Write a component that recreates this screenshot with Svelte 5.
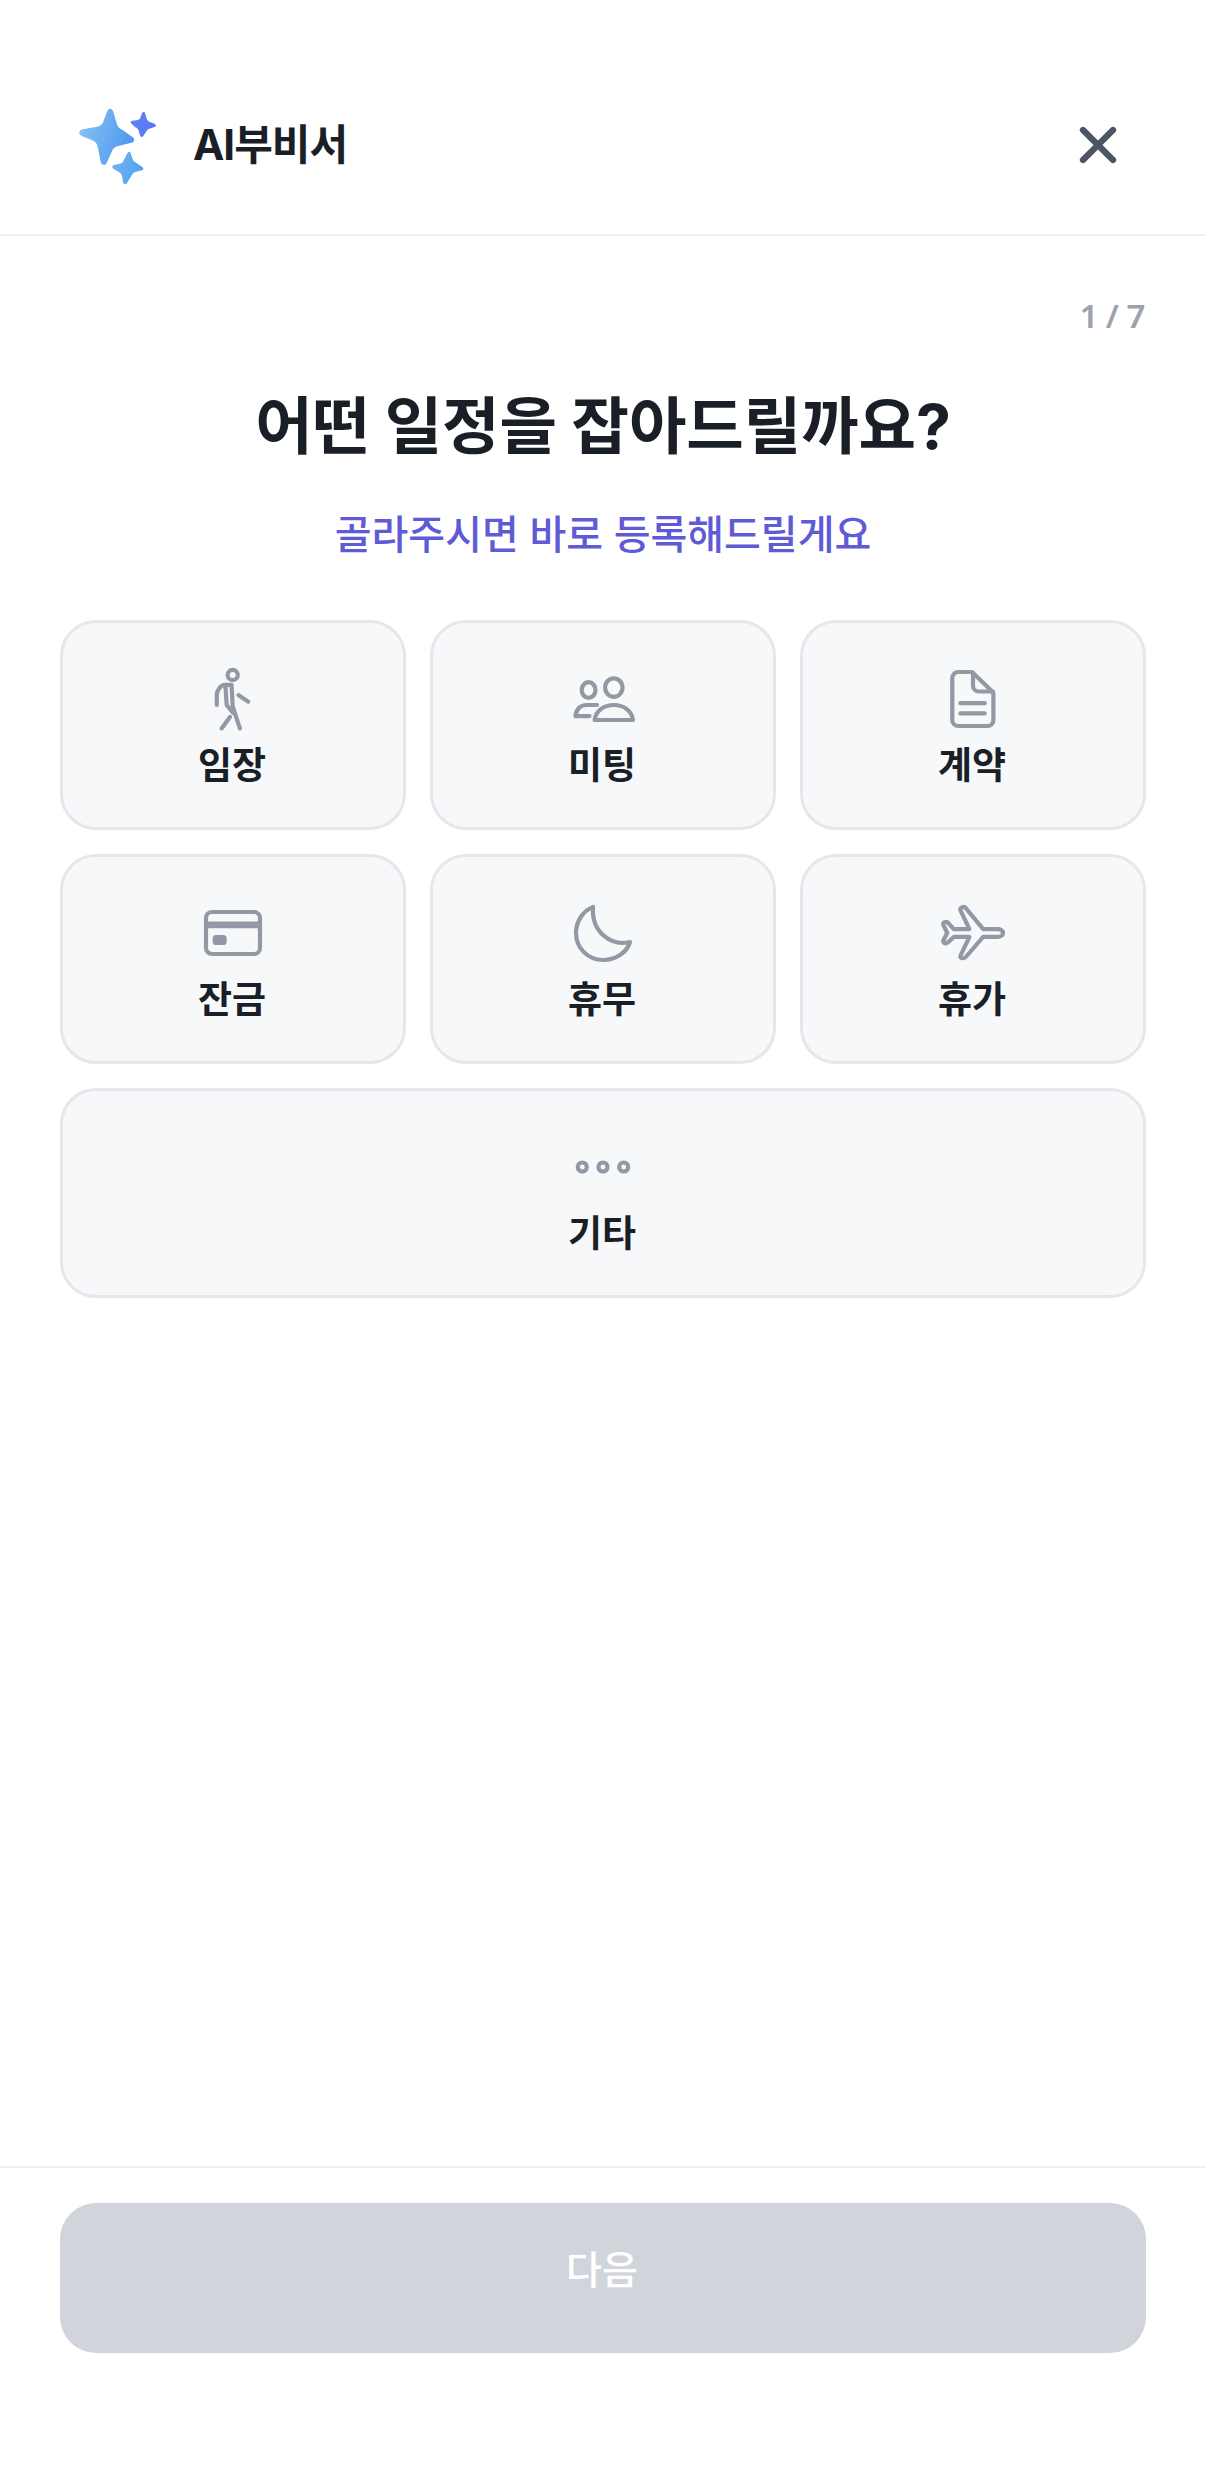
<script>
	const options = [
		{ id: 'walk', label: '임장' },
		{ id: 'people', label: '미팅' },
		{ id: 'doc', label: '계약' },
		{ id: 'card', label: '잔금' },
		{ id: 'moon', label: '휴무' },
		{ id: 'plane', label: '휴가' },
		{ id: 'more', label: '기타' }
	];
</script>

<div class="page">
	<header class="header">
		<svg class="logo" width="110" height="110" viewBox="0 0 330 330">
			<defs>
				<linearGradient id="star-a" x1="0" y1="0.3" x2="1" y2="0.6">
					<stop offset="0" stop-color="#86c1f6" />
					<stop offset="1" stop-color="#4c97ee" />
				</linearGradient>
				<linearGradient id="star-b" x1="0" y1="0" x2="1" y2="1">
					<stop offset="0" stop-color="#5a86f3" />
					<stop offset="1" stop-color="#5c74f4" />
				</linearGradient>
				<linearGradient id="star-c" x1="0" y1="0.3" x2="1" y2="0.6">
					<stop offset="0" stop-color="#72b4f4" />
					<stop offset="1" stop-color="#4f9ff2" />
				</linearGradient>
			</defs>
			<path fill="url(#star-a)" d="M141 65C145 53 156 53 160 65L170 100C172 110 178 116 188 120L216 140C226 146 224 156 214 158L175 168C165 170 158 176 155 186L140 218C135 228 124 226 122 215L113 170C111 160 105 153 95 150L65 138C54 132 56 120 68 118L112 110C122 108 128 102 131 92Z" />
			<path fill="url(#star-b)" d="M245 72C248 64 254 64 256 72L260 86C262 91 265 94 270 96L283 101C289 104 289 109 283 111L268 116C263 118 260 121 258 126L250 138C246 143 241 142 240 136L236 122C234 117 231 114 226 112L215 102C210 98 211 93 217 92L233 90C238 89 241 86 242 81Z" />
			<path fill="url(#star-c)" d="M201 192C204 184 211 184 213 192L218 208C220 213 223 216 228 218L246 230C252 234 251 240 245 241L226 246C221 247 217 251 215 256L201 279C197 285 190 283 189 276L186 258C185 253 182 249 177 247L161 237C155 233 156 227 162 225L180 221C185 220 189 216 191 211Z" />
		</svg>
		<span class="brand">AI부비서</span>
		<svg class="close" width="72" height="72" viewBox="0 0 24 24" fill="none" stroke="#4b5563" stroke-width="2.1" stroke-linecap="round">
			<path d="M17 7L7 17M7 7l10 10" />
		</svg>
	</header>

	<main class="content">
		<div class="step">1 / 7</div>
		<h1 class="title">어떤 일정을 잡아드릴까요?</h1>
		<p class="subtitle">골라주시면 바로 등록해드릴게요</p>

		<div class="grid">
			{#each options as option}
				<button class="option" class:wide={option.id === 'more'}>
					<svg width="72" height="72" viewBox="0 0 24 24" fill="none" stroke="#9399a4" stroke-width="1.4" stroke-linecap="round" stroke-linejoin="round">
						{#if option.id === 'walk'}
							<circle cx="11.9" cy="4" r="1.7" />
							<path d="M6.6 14V10.7C6.6 9 8 7.3 9.3 7.3H11.5L11.9 14.5L14.3 21.8" />
							<path d="M9.5 7.9L9.9 14L12 16.6M11 18L8.2 21.8M13.8 10.7L17.1 12.9" />
						{:else if option.id === 'people'}
							<ellipse cx="7.2" cy="9" rx="2.3" ry="2.6" />
							<ellipse cx="15.6" cy="8.2" rx="2.9" ry="3.1" />
							<path d="M9.2 19C9.6 16 12.2 14 15.6 14C19 14 21.6 16 22 19Z" />
							<path d="M7.5 17.7H2.8C3 15.5 4.5 14 6.5 14H10" />
						{:else if option.id === 'doc'}
							<path d="M5.1 5a2 2 0 0 1 2-2h4.2a1 1 0 0 1 .8.4l6.4 6.2a1 1 0 0 1 .3.7V19a2 2 0 0 1-2 2H7.1a2 2 0 0 1-2-2Z" />
							<path d="M12 3.2V7.5a2 2 0 0 0 2 2h4.6M7.8 13.4H15.9M7.8 16.8H15.9" />
						{:else if option.id === 'card'}
							<rect x="3" y="5" width="18" height="14" rx="2" />
							<path d="M3 9.3H21" stroke-width="2.2" stroke-linecap="butt" />
							<rect x="5.2" y="12.7" width="4.7" height="3.3" rx="1.2" fill="#9399a4" stroke="none" />
						{:else if option.id === 'moon'}
							<path d="M8.7 3.3C5.2 4.7 3 8.2 3 12C3 17 7 21 12 21C16 21 19.8 18.8 21 15C15 16.5 8 12 8.7 3.3Z" />
						{:else if option.id === 'plane'}
							<path d="M22 12c0 .8-.8 1.3-1.8 1.3H15.4L9.6 20c-.5.6-2 .6-1.8-.4L10.8 13.3H5.6L3.6 15.2c-.7.5-1.6.2-1.5-.6L3.4 12L2.1 9.2c-.1-.8.8-1.2 1.5-.7L5.6 10.7H10.8L7.8 4.4c-.2-1 1.3-1.4 1.8-.7L15.4 10.7H20.2c1 0 1.8.5 1.8 1.3Z" />
						{:else}
							<circle cx="5.1" cy="12" r="1.5" />
							<circle cx="12" cy="12" r="1.5" />
							<circle cx="18.9" cy="12" r="1.5" />
						{/if}
					</svg>
					<span class="label">{option.label}</span>
				</button>
			{/each}
		</div>
	</main>

	<footer class="footer">
		<button class="next" disabled>다음</button>
	</footer>
</div>

<style>
	:global(body) {
		margin: 0;
		background: #fff;
	}

	.page {
		height: 2491px;
		display: flex;
		flex-direction: column;
		box-sizing: border-box;
		font-family: Inter, "Noto Sans CJK KR", sans-serif;
		color: #1a1e27;
	}

	.header {
		box-sizing: border-box;
		height: 236px;
		padding: 90px 72px 0 60px;
		display: flex;
		align-items: flex-start;
		border-bottom: 2px solid #f0f1f3;
	}

	.logo {
		flex: none;
	}

	.brand {
		margin-left: 23px;
		font-size: 42px;
		line-height: 110px;
		font-weight: 700;
		letter-spacing: -1px;
	}

	.close {
		margin-left: auto;
		margin-top: 19px;
	}

	.content {
		flex: 1;
		padding: 0 60px;
	}

	.step {
		margin-top: 60px;
		padding-right: 1px;
		height: 40px;
		line-height: 40px;
		text-align: right;
		font-family: "Noto Sans", sans-serif;
		font-size: 33px;
		font-weight: 600;
		color: #9ca3af;
		letter-spacing: -0.5px;
	}

	.title {
		margin: 50px 0 0;
		text-align: center;
		font-size: 62.5px;
		line-height: 80px;
		font-weight: 700;
		letter-spacing: -0.1px;
	}

	.subtitle {
		margin: 40px 0 0;
		text-align: center;
		font-size: 40px;
		line-height: 58px;
		font-weight: 500;
		color: #5f5ad6;
	}

	.grid {
		margin-top: 56px;
		display: grid;
		grid-template-columns: repeat(3, 1fr);
		gap: 24px;
	}

	.option {
		box-sizing: border-box;
		height: 210px;
		padding: 40px 0 0;
		display: flex;
		flex-direction: column;
		align-items: center;
		background: #f7f8fa;
		border: 3px solid #e5e7eb;
		border-radius: 36px;
		font-family: inherit;
		color: inherit;
	}

	.wide {
		grid-column: 1 / -1;
	}

	.label {
		margin: 4px 2px 0 0;
		font-size: 37px;
		line-height: 54px;
		font-weight: 700;
	}

	.footer {
		box-sizing: border-box;
		height: 325px;
		padding: 35px 60px 0;
		border-top: 2px solid #f0f1f3;
	}

	.next {
		display: block;
		width: 100%;
		height: 150px;
		padding: 0 2px 22px 0;
		border: 0;
		border-radius: 36px;
		background: #d1d5db;
		color: #fff;
		font-family: inherit;
		font-size: 39px;
		font-weight: 500;
	}
</style>
